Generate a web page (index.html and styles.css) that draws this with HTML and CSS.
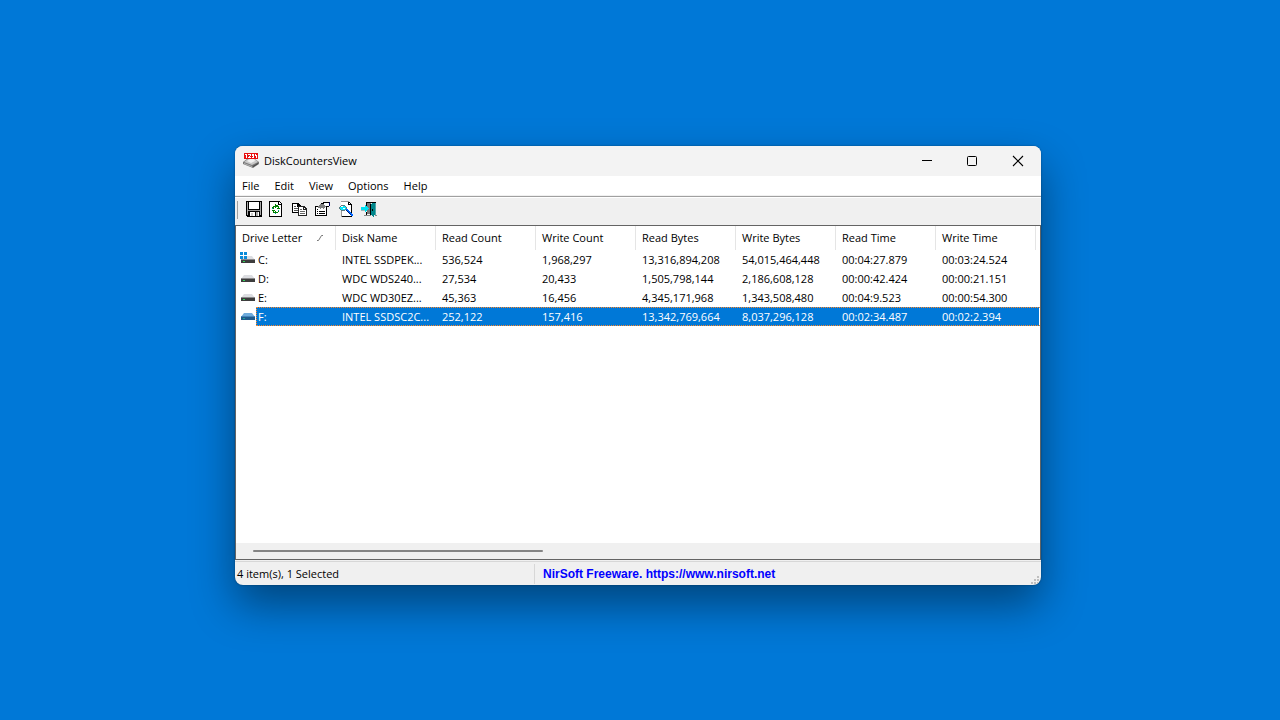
FILE: index.html
```html
<!DOCTYPE html>
<html lang="en">
<head>
<meta charset="utf-8">
<title>DiskCountersView</title>
<link rel="stylesheet" href="styles.css">
</head>
<body>
<svg width="0" height="0" class="defs" aria-hidden="true">
  <symbol id="drive" viewBox="0 0 16 16">
    <path d="M4 5h8l3 4H1z" fill="#dcdde1"/>
    <path d="M1 9h14v3H1z" fill="#3d3d3d"/>
    <path d="M1 8h14v1H1z" fill="#8a8a8c"/>
    <path d="M3 10h2v1H3z" fill="#30d158"/>
  </symbol>
</svg>
<main class="desktop">
  <section class="window">
    <header class="titlebar">
      <svg class="app-icon" width="16" height="16" viewBox="0 0 16 16">
        <path d="M0 9l4-3h8l4 3v2l-6 4-10-4z" fill="#777"/>
        <path d="M1 9l4-3h7l3 3-6 3z" fill="#c9c9c9"/>
        <path d="M4 8l3-2h4l1 2-4 2z" fill="#f2f2f2"/>
        <path d="M1 10l8 3v1l-8-3z" fill="#b5b5b5"/><path d="M10 13l5-3v1l-5 3z" fill="#444"/>
        <path d="M1 0h14v6H1z" fill="#e81010"/>
        <path d="M2 1h2v4H3V2H2zM5 1h3v2H7v1h1v1H5V4h1V3h1V2H5zM9 1h2v4H9V4h1V3H9zM12 1h1v1h1V1h0v4h-1V3h-1z" fill="#fff" shape-rendering="crispEdges"/>
      </svg>
      <h1>DiskCountersView</h1>
      <div class="caption-buttons">
        <button aria-label="Minimize"><svg width="12" height="12" viewBox="0 0 12 12"><path d="M2 5.500h10" stroke="#000"/></svg></button>
        <button aria-label="Maximize"><svg width="12" height="12" viewBox="0 0 12 12"><rect x="1.500" y="1.500" width="9" height="9" rx="1" fill="none" stroke="#000"/></svg></button>
        <button aria-label="Close"><svg width="12" height="12" viewBox="0 0 12 12"><path d="M1 1l10 10M11 1L1 11" stroke="#000" stroke-width="1.100"/></svg></button>
      </div>
    </header>
    <nav class="menubar">
      <button>File</button><button>Edit</button><button>View</button><button>Options</button><button>Help</button>
    </nav>
    <div class="toolbar">
      <button aria-label="Save"><svg width="16" height="16" viewBox="0 0 16 16">
        <path d="M0 0h16v16H1l-1-1z" fill="#000"/><path d="M1 1h1v13H1zM14 2h1v12h-1zM14 1h1v1h-1z" fill="#aaa"/><path d="M3 1h10v7H3z" fill="#fff"/><path d="M2 9h12v1H2z" fill="#999"/><path d="M4 11h5v4H4zM12 11h1v4h-1z" fill="#fff"/><path d="M10 11h2v4h-2z" fill="#aaa"/><path d="M5 12h2v3H5z" fill="#ccc"/></svg></button>
      <button aria-label="Refresh"><svg width="16" height="16" viewBox="0 0 16 16">
        <path d="M0 0h10l3 3v13H0z" fill="#000"/><path d="M1 1h8v3h3v11H1z" fill="#fff"/><path d="M10 1h1v1h1v1h-2z" fill="#fff"/>
        <path d="M6 3h1v1h2v1h1v2h1v1H8V7h1V6H7v1H6V6H5v2H3V6h1V5h2z" fill="#008000"/><path d="M3 9h3v1H5v1h1v-1h1v1h2V9h1v2H9v1H7v1H6v-1H4v-2H3z" fill="#008000"/><path d="M3 7h1v1H3zM9 9h1v1H9zM6 12h1v1H6z" fill="#009ca0"/></svg></button>
      <button aria-label="Copy"><svg width="16" height="16" viewBox="0 0 16 16">
        <path d="M0 2h6l3 3v7H0z" fill="#000"/><path d="M1 3h4v3h3v5H1z" fill="#fff"/><path d="M2 5h2v1H2zM2 7h5v1H2zM2 9h5v1H2z" fill="#555"/>
        <path d="M6 5h6l3 3v7H6z" fill="#222"/><path d="M7 6h4v3h3v5H7zM12 7l1 1h-1z" fill="#fff"/><path d="M8 8h2v1H8zM8 10h5v1H8zM8 12h5v1H8z" fill="#666"/></svg></button>
      <button aria-label="Properties"><svg width="16" height="16" viewBox="0 0 16 16">
        <path d="M0 5h12v10H0z" fill="#000"/><path d="M1 6h10v8H1z" fill="#fff"/><path d="M2 8h1v1H2zM2 10h1v1H2zM2 12h1v1H2zM4 10h6v1H4zM4 12h6v1H4z" fill="#000"/>
        <path d="M3 5h1V4h1V3h1V2h3v1h3v2h-1v1h-1v1H9v1H8V7H6v1H5V7H3z" fill="#808080"/>
        <path d="M8 2h5v1h1v2h-4V4H9V3H8z" fill="#fff"/><path d="M6 2h2V1h6v1H9v1H6zM11 5h3v1h-3z" fill="#000"/><path d="M14 1h1v4h-1z" fill="#000060"/></svg></button>
      <button aria-label="Find"><svg width="16" height="16" viewBox="0 0 16 16">
        <path d="M3 0h8v1h1v1h1v1h1v13H3z" fill="#000"/><path d="M3 1h7v3h3v11H3z" fill="#fff"/><path d="M3 0h8v1H3zM3 8h1v8H3z" fill="#999"/><path d="M11 2h1v1h-1z" fill="#fff"/>
        <path d="M3 4h4v1h1v1h1v2H8v1H7v1H3V9H2V8H1V6h1V5h1z" fill="#5d7a80"/><path d="M3 5h4v1h1v2H7v1H3V8H2V6h1z" fill="#00eaff"/><path d="M3 5h2v1H3zM5 7h2v1H5z" fill="#fff"/>
        <path d="M8 8h2v1h1v1h1v1h1v1h1v1h1v2h-2v-1h-1v-1h-1v-1h-1v-1H9v-1H8z" fill="#0068ff"/><path d="M8 9l5 5" stroke="#001b7a"/></svg></button>
      <button aria-label="Exit"><svg width="16" height="16" viewBox="0 0 16 16">
        <path d="M5 1h10v1H5zM5 2h1v3H5zM5 11h1v3H5z" fill="#000"/><path d="M6 2h4v11H6z" fill="#777"/><path d="M10 3h1V2h4v12h-2v2h-1v-1h-1v-1h-1z" fill="#00868b"/><path d="M9 3h1v11H9z" fill="#000"/><path d="M14 2h1v12h-1z" fill="#50a8ab"/><path d="M11 8h1v2h-1z" fill="#000"/><path d="M3 14h7v1H3zM14 14h2v1h-2z" fill="#888"/>
        <path d="M0 6h4V4h1v1h1v1h1v1h1v1H7v1H6v1H5v1H4V9H0z" fill="#00dff0"/><path d="M0 9h4v1H0z" fill="#a0b8ba"/></svg></button>
    </div>
    <div class="list">
      <table>
        <colgroup><col class="c"><col class="c"><col class="c"><col class="c"><col class="c"><col class="c"><col class="c"><col class="c"><col></colgroup>
        <thead>
          <tr><th><span class="sorted">Drive Letter<svg width="6" height="6" viewBox="0 0 6 6"><path d="M0 5.500h1.500L4.500 .5H6" fill="none" stroke="#777"/></svg></span></th><th>Disk Name</th><th>Read Count</th><th>Write Count</th><th>Read Bytes</th><th>Write Bytes</th><th>Read Time</th><th>Write Time</th><th></th></tr>
        </thead>
        <tbody>
          <tr><td><span class="drive"><svg width="16" height="16" viewBox="0 0 16 16"><use href="#drive"/><path d="M0 1h3v3H0zM4 1h3v3H4zM0 5h3v3H0zM4 5h3v3H4z" fill="#0a8bd9"/></svg>C:</span></td><td>INTEL SSDPEK...</td><td>536,524</td><td>1,968,297</td><td>13,316,894,208</td><td>54,015,464,448</td><td>00:04:27.879</td><td>00:03:24.524</td><td></td></tr>
          <tr><td><span class="drive"><svg width="16" height="16"><use href="#drive"/></svg>D:</span></td><td>WDC WDS240...</td><td>27,534</td><td>20,433</td><td>1,505,798,144</td><td>2,186,608,128</td><td>00:00:42.424</td><td>00:00:21.151</td><td></td></tr>
          <tr><td><span class="drive"><svg width="16" height="16"><use href="#drive"/></svg>E:</span></td><td>WDC WD30EZ...</td><td>45,363</td><td>16,456</td><td>4,345,171,968</td><td>1,343,508,480</td><td>00:04:9.523</td><td>00:00:54.300</td><td></td></tr>
          <tr class="selected"><td><span class="drive"><svg width="16" height="16" viewBox="0 0 16 16"><path d="M4 5h8l3 4H1z" fill="#6eabdc"/><path d="M1 9h14v3H1z" fill="#1f5a8c"/><path d="M1 8h14v1H1z" fill="#4585ba"/><path d="M3 10h2v1H3z" fill="#18a596"/></svg>F:</span></td><td>INTEL SSDSC2C...</td><td>252,122</td><td>157,416</td><td>13,342,769,664</td><td>8,037,296,128</td><td>00:02:34.487</td><td>00:02:2.394</td><td></td></tr>
        </tbody>
      </table>
      <div class="scrollbar"><div class="thumb"></div></div>
    </div>
    <footer class="statusbar">
      <span class="count">4 item(s), 1 Selected</span>
      <a href="https://www.nirsoft.net">NirSoft Freeware. https://www.nirsoft.net</a>
      <svg class="grip" width="8" height="8" viewBox="0 0 8 8"><path d="M6 0h2v2H6zM3 3h2v2H3zM6 3h2v2H6zM0 6h2v2H0zM3 6h2v2H3zM6 6h2v2H6z" fill="#bfbfbf"/></svg>
    </footer>
  </section>
</main>
</body>
</html>
```
FILE: styles.css
```css
* {
  box-sizing: border-box;
}

body {
  margin: 0;
  background: #0078d7;
  color: #000;
  font: 11px/18px "Open Sans", "Noto Sans", sans-serif;
}

button {
  margin: 0;
  padding: 0;
  border: 0;
  background: none;
  color: inherit;
  font: inherit;
}

svg {
  display: block;
  flex: none;
}

.defs {
  position: absolute;
}

.desktop {
  display: flex;
  min-height: 100vh;
  padding: 146px 239px 135px 235px;
}

.window {
  display: flex;
  flex: 1;
  flex-direction: column;
  min-width: 0;
  overflow: hidden;
  border-radius: 8px;
  background: #f0f0f0;
  box-shadow: 0 0 2px rgba(0, 0, 0, .4), 0 20px 44px rgba(0, 0, 0, .42);
}

.titlebar {
  display: flex;
  align-items: center;
  height: 30px;
  padding-left: 8px;
  background: #f3f3f3;
}

.titlebar h1 {
  flex: 1;
  margin: 0;
  padding-left: 5px;
  font-size: 11px;
  font-weight: 400;
}

.caption-buttons {
  display: flex;
}

.caption-buttons button {
  display: grid;
  place-items: center;
  width: 46px;
  height: 28px;
}

.menubar {
  display: flex;
  gap: 15px;
  height: 20px;
  padding: 1px 7px;
  border-bottom: 1px solid #f0f0f0;
  background: #fff;
}

.toolbar {
  display: flex;
  align-items: flex-start;
  gap: 7px;
  height: 29px;
  padding: 4px 11px;
  border-top: 1px solid #a0a0a0;
  background:
    linear-gradient(#a0a0a0, #a0a0a0) 2px 4px / 1px 18px no-repeat,
    linear-gradient(#fff, #fff) 0 0 / 100% 1px no-repeat,
    #f0f0f0;
}

.toolbar svg {
  shape-rendering: crispEdges;
}

.list {
  display: flex;
  flex: 1;
  flex-direction: column;
  justify-content: space-between;
  overflow: hidden;
  border: 1px solid #646464;
  background: #fff;
}

table {
  width: calc(100% + 2px);
  border-collapse: collapse;
  table-layout: fixed;
}

.c {
  width: 100px;
}

th,
td {
  padding: 0 0 0 6px;
  font-weight: 400;
  text-align: left;
  white-space: nowrap;
}

th:last-child,
td:last-child {
  padding: 0;
}

th {
  height: 24px;
  background: linear-gradient(#e5e5e5, #e5e5e5) right / 1px 100% no-repeat;
}

th:last-child {
  background: none;
}

td {
  height: 19px;
}

td:first-child {
  padding-left: 4px;
}

.sorted {
  display: flex;
  align-items: center;
  justify-content: space-between;
  padding-right: 13px;
}

.drive {
  display: flex;
  gap: 2px;
}

.selected {
  position: relative;
  color: #fff;
}

.selected td {
  background: #0078d7;
}

.selected td:first-child {
  background: linear-gradient(to right, #fff 20px, #0078d7 20px);
}

.selected::after {
  content: "";
  position: absolute;
  inset: 0 0 0 20px;
  border: 1px dotted #ff8728;
  border-right: 0;
}

.scrollbar {
  height: 16px;
  padding: 7px 17px;
  background: #f0f0f0;
}

.thumb {
  width: 290px;
  height: 2px;
  border-radius: 1px;
  background: #858585;
}

.statusbar {
  display: flex;
  align-items: stretch;
  height: 24px;
  margin-top: 1px;
  padding: 2px 2px 1px;
  border-top: 1px solid #d7d7d7;
  line-height: 20px;
}

.count {
  width: 298px;
  border-right: 1px solid #d7d7d7;
}

.statusbar a {
  flex: 1;
  padding-left: 8px;
  color: #00f;
  font: bold 12px/20px "Liberation Sans", Arial, sans-serif;
  text-decoration: none;
}

.grip {
  align-self: flex-end;
}
```
